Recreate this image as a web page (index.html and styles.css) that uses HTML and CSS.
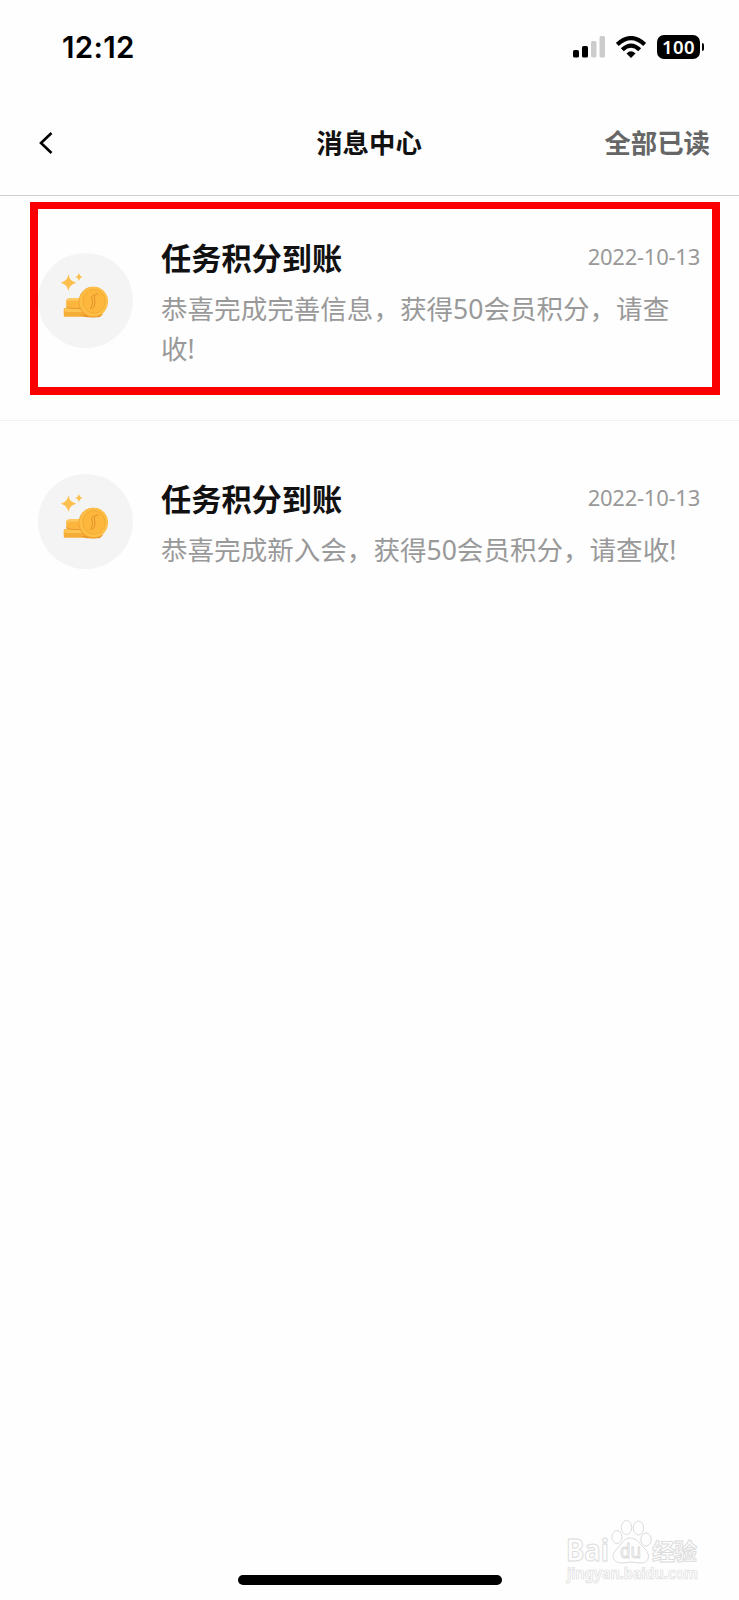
FILE: index.html
```
<!DOCTYPE html>
<html lang="zh-CN">
<head>
    <meta charset="UTF-8">
    <meta name="viewport" content="width=device-width, initial-scale=1.0">
    <title>消息中心</title>
    <link rel="stylesheet" href="styles.css">
</head>
<body>
    <!-- shared coin icon -->
    <svg class="defs" width="0" height="0">
        <symbol id="coins" viewBox="0 0 96 96">
            <path d="M30.700 21.500 C32 27 34 28.500 38.800 30 C34 31.500 32 33 30.700 38.500 C29.500 33 27.500 31.500 23 30 C27.500 28.500 29.500 27 30.700 21.500Z" fill="#fdbf4d"/>
            <path d="M41.300 20 C42 23 43 23.800 45.300 24.300 C43 25 42 25.800 41.300 28.500 C40.600 25.800 39.600 25 37.500 24.300 C39.600 23.800 40.600 23 41.300 20Z" fill="#fdbf4d"/>
            <path d="M26 57 Q26 55 30 55 H50 V64.500 H26.500 Q26 64.500 26 62.500Z" fill="#f6ad38"/>
            <path d="M26 57.500 Q26 55.500 30 56 L45 57 V59.500 H30 Q26 59.500 26 57.500Z" fill="#fdc453"/>
            <path d="M28.500 48 Q28.500 45.700 33 45.700 H46 V55.500 H33 Q28.500 55.500 28.500 53.500Z" fill="#fcb63e"/>
            <path d="M28.500 48 Q30 45.500 36 45.500 H46 V48 H34 Q29 49 28.500 48Z" fill="#fdc965"/>
            <path d="M28.500 54 Q30 56.500 42 56" fill="none" stroke="#e8972c" stroke-width="1"/>
            <path d="M43 63 L49 65 H62 L66 62Z" fill="#e79529"/>
            <ellipse cx="55.500" cy="49.600" rx="14.500" ry="15.500" fill="#f0a131"/>
            <ellipse cx="56.300" cy="49" rx="14.500" ry="15" fill="#fdbe45"/>
            <ellipse cx="56.500" cy="48.800" rx="11.200" ry="12" fill="#fcb73c" stroke="#f3ab36" stroke-width="1"/>
            <path d="M61 41.500 Q56.500 41 57 45.500 Q58.500 50.500 56.500 54.500 Q55.500 56.500 52.500 55.500 M57 42.500 Q53 43 54.500 46.500 Q56 50.500 54 54.500" fill="none" stroke="#e3922a" stroke-width="1"/>
        </symbol>
    </svg>

    <div class="screen">
        <div class="status-bar">
            <span class="time">12:12</span>
            <div class="status-icons">
                <svg width="32" height="22" viewBox="0 0 32 22">
                    <rect x="0" y="14" width="6" height="7.500" rx="1.600"/>
                    <rect x="9" y="10" width="6" height="11.500" rx="1.600"/>
                    <rect x="18" y="5" width="5.500" height="16.500" rx="1.600" fill="#ccc"/>
                    <rect x="26.500" y="0" width="5.500" height="21.500" rx="1.600" fill="#ccc"/>
                </svg>
                <svg class="wifi" width="30" height="22" viewBox="0 0 30 22">
                    <g fill="none" stroke="#000" stroke-width="4.200">
                        <path d="M1.300 8.400 Q15 -4.200 28.700 8.400"/>
                        <path d="M6.300 13.800 Q15 5.500 23.700 13.800"/>
                    </g>
                    <path d="M10.500 17.400 Q15 13.300 19.500 17.400 L15 22Z"/>
                </svg>
                <span class="battery">100</span>
                <span class="battery-tip"></span>
            </div>
        </div>

        <header class="nav-bar">
            <svg class="back" width="14" height="22" viewBox="0 0 14 22">
                <path d="M12.500 1 L2 11 L12.500 21" fill="none" stroke="#000" stroke-width="2.600"/>
            </svg>
            <h1>消息中心</h1>
            <span class="read-all">全部已读</span>
        </header>

        <main class="message-list">
            <div class="message">
                <div class="avatar"><svg width="95" height="95"><use href="#coins"/></svg></div>
                <div class="message-body">
                    <div class="message-head">
                        <h2>任务积分到账</h2>
                        <span class="date">2022-10-13</span>
                    </div>
                    <p>恭喜完成完善信息，获得50会员积分，请查收!</p>
                </div>
                <div class="highlight"></div>
            </div>
            <div class="message">
                <div class="avatar"><svg width="95" height="95"><use href="#coins"/></svg></div>
                <div class="message-body">
                    <div class="message-head">
                        <h2>任务积分到账</h2>
                        <span class="date">2022-10-13</span>
                    </div>
                    <p>恭喜完成新入会，获得50会员积分，请查收!</p>
                </div>
            </div>
        </main>

        <svg class="watermark" width="140" height="72" viewBox="0 0 140 72">
            <g class="mark-outline">
                <text x="2" y="41" font-size="30" textLength="43" lengthAdjust="spacingAndGlyphs">Bai</text>
                <ellipse cx="53" cy="17" rx="5" ry="6.500"/>
                <ellipse cx="62.500" cy="7.500" rx="5.200" ry="7"/>
                <ellipse cx="74.500" cy="8" rx="5.200" ry="7"/>
                <ellipse cx="82" cy="19.500" rx="5.200" ry="6.500"/>
                <path d="M66 18 C60 18 57 25 52 30 C46 36 50 43 58 43 C62 43 64 42 67 42 C70 42 73 43 77 43 C85 43 87 35 81 29 C76 25 74 18 66 18Z"/>
                <text class="du" x="56" y="38" font-size="19" textLength="21" lengthAdjust="spacingAndGlyphs">du</text>
                <text x="88" y="40" font-size="23" textLength="45">经验</text>
                <text class="url" x="3" y="59" font-size="15.500" textLength="131" lengthAdjust="spacingAndGlyphs">jingyan.baidu.com</text>
            </g>
        </svg>
        <div class="home-indicator"></div>
    </div>
</body>
</html>
```
FILE: styles.css
```
* {
    box-sizing: border-box;
}
body {
    margin: 0;
    background: #fefefe;
    color: #111;
    font-family: "Noto Sans", "Noto Sans CJK SC", sans-serif;
}
h1, h2, p {
    margin: 0;
}
.defs {
    position: absolute;
}
.screen {
    position: relative;
    display: flex;
    flex-direction: column;
    width: 739px;
    height: 1600px;
    overflow: hidden;
}

/* status bar */
.status-bar {
    display: flex;
    justify-content: space-between;
    align-items: center;
    height: 94px;
    padding: 0 35px 0 62px;
    color: #000;
}
.time {
    font-family: Inter, sans-serif;
    font-size: 29.5px;
    font-weight: 600;
    letter-spacing: 0.3px;
}
.status-icons {
    display: flex;
    align-items: center;
}
.wifi {
    margin: 0 11px 0 11px;
}
.battery {
    width: 43px;
    height: 24px;
    border-radius: 7px;
    background: #000;
    color: #fff;
    font-size: 18.5px;
    font-weight: 600;
    line-height: 24px;
    letter-spacing: 0.4px;
    text-align: center;
}
.battery-tip {
    width: 2px;
    height: 8px;
    margin-left: 2px;
    border-radius: 0 3px 3px 0;
    background: #000;
}

/* header */
.nav-bar {
    display: grid;
    grid-template-columns: 1fr auto 1fr;
    align-items: center;
    height: 102px;
    padding: 0 29px 4px 39px;
    border-bottom: 1px solid #cdd1d0;
}
.nav-bar h1,
.read-all {
    font-size: 26.4px;
    font-weight: 600;
    line-height: 40px;
}
.nav-bar h1 {
    margin-left: -11px;
}
.read-all {
    justify-self: end;
    color: #666;
}

/* messages */
.message {
    position: relative;
    display: flex;
    align-items: center;
    padding: 53px 39px 51px 38px;
}
.message:first-child {
    padding-top: 40px;
    border-bottom: 1px solid #f1f1f1;
}
.avatar {
    flex: none;
    width: 95px;
    height: 95px;
    margin: 0 28px 4px 0;
    border-radius: 50%;
    background: #f4f4f4;
}
.avatar svg {
    display: block;
}
.message-body {
    flex: 1;
}
.message-head {
    display: flex;
    justify-content: space-between;
    height: 44px;
    margin-bottom: 9px;
}
.message h2 {
    font-size: 30.2px;
    font-weight: 600;
    line-height: 46px;
}
.date {
    color: #999;
    font-size: 22px;
    line-height: 41px;
    letter-spacing: -0.25px;
}
.message p {
    color: #999;
    font-size: 26.55px;
    line-height: 40px;
}
.highlight {
    position: absolute;
    top: 6px;
    left: 30px;
    width: 690px;
    height: 193px;
    border: 8px solid #fb0000;
    border-top-width: 7px;
}

/* bottom overlays */
.watermark {
    position: absolute;
    right: 35px;
    bottom: 8px;
}
.mark-outline {
    fill: #fefefe;
    stroke: #dcdcdc;
    stroke-width: 1;
    font-weight: 700;
}
.mark-outline .du {
    font-weight: 400;
}
.mark-outline .url {
    stroke-width: 0.7;
}
.home-indicator {
    position: absolute;
    bottom: 15px;
    left: 238px;
    width: 264px;
    height: 10px;
    border-radius: 5px;
    background: #000;
}
```
